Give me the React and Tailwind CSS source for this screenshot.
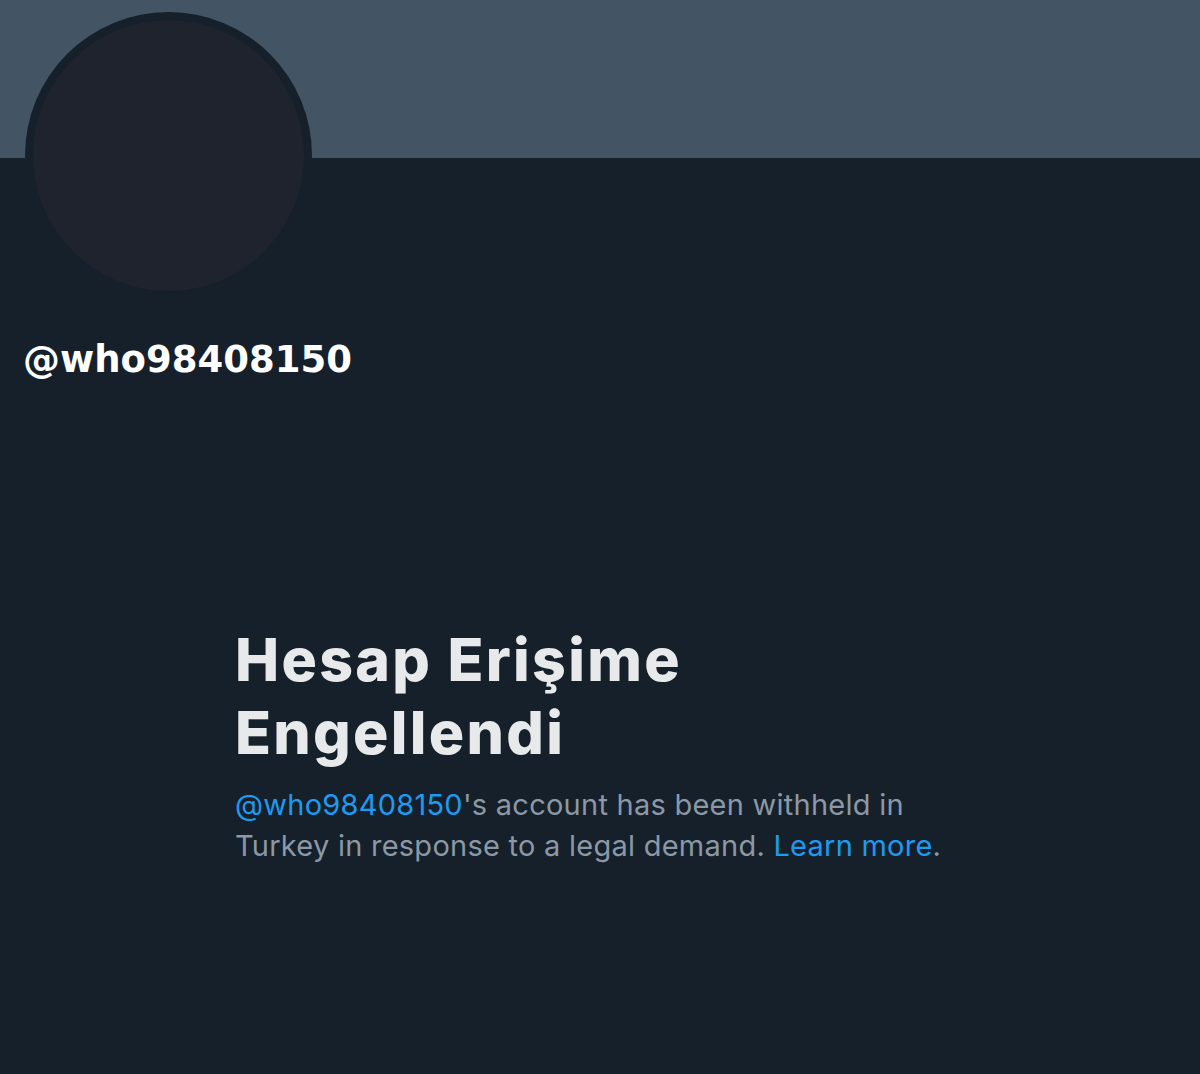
export default function App() {
  return (
    <div className="w-[1200px] h-[1074px] bg-[#16202a] overflow-hidden">
      <div className="h-[158px] bg-[#435465]" />
      <div className="ml-[25px] -mt-[146px] w-[287px] h-[287px] rounded-full bg-[#16202a] p-[8px]">
        <div className="w-full h-full rounded-full bg-[#1e232d]" />
      </div>
      <div
        className="ml-[23px] mt-[41px] text-[37px] leading-[40px] font-bold text-white"
        style={{ fontFamily: '"DejaVu Sans", sans-serif' }}
      >
        @who98408150
      </div>
      <div className="ml-[235px] mt-[243px] w-[720px]" style={{ fontFamily: 'Inter, "Noto Sans", sans-serif' }}>
        <h1 className="text-[59px] leading-[73px] font-extrabold text-[#e7e9ea] tracking-[2.3px]">
          Hesap Erişime
          <br />
          Engellendi
        </h1>
        <p className="mt-[15px] text-[29px] leading-[41px] text-[#8b98a5] w-[720px] tracking-[0.25px]">
          <span className="text-[#1d9bf0]">@who98408150</span>'s account has been withheld in
          <br />
          Turkey in response to a legal demand.{" "}
          <span className="text-[#1d9bf0]">Learn more</span>.
        </p>
      </div>
    </div>
  );
}
